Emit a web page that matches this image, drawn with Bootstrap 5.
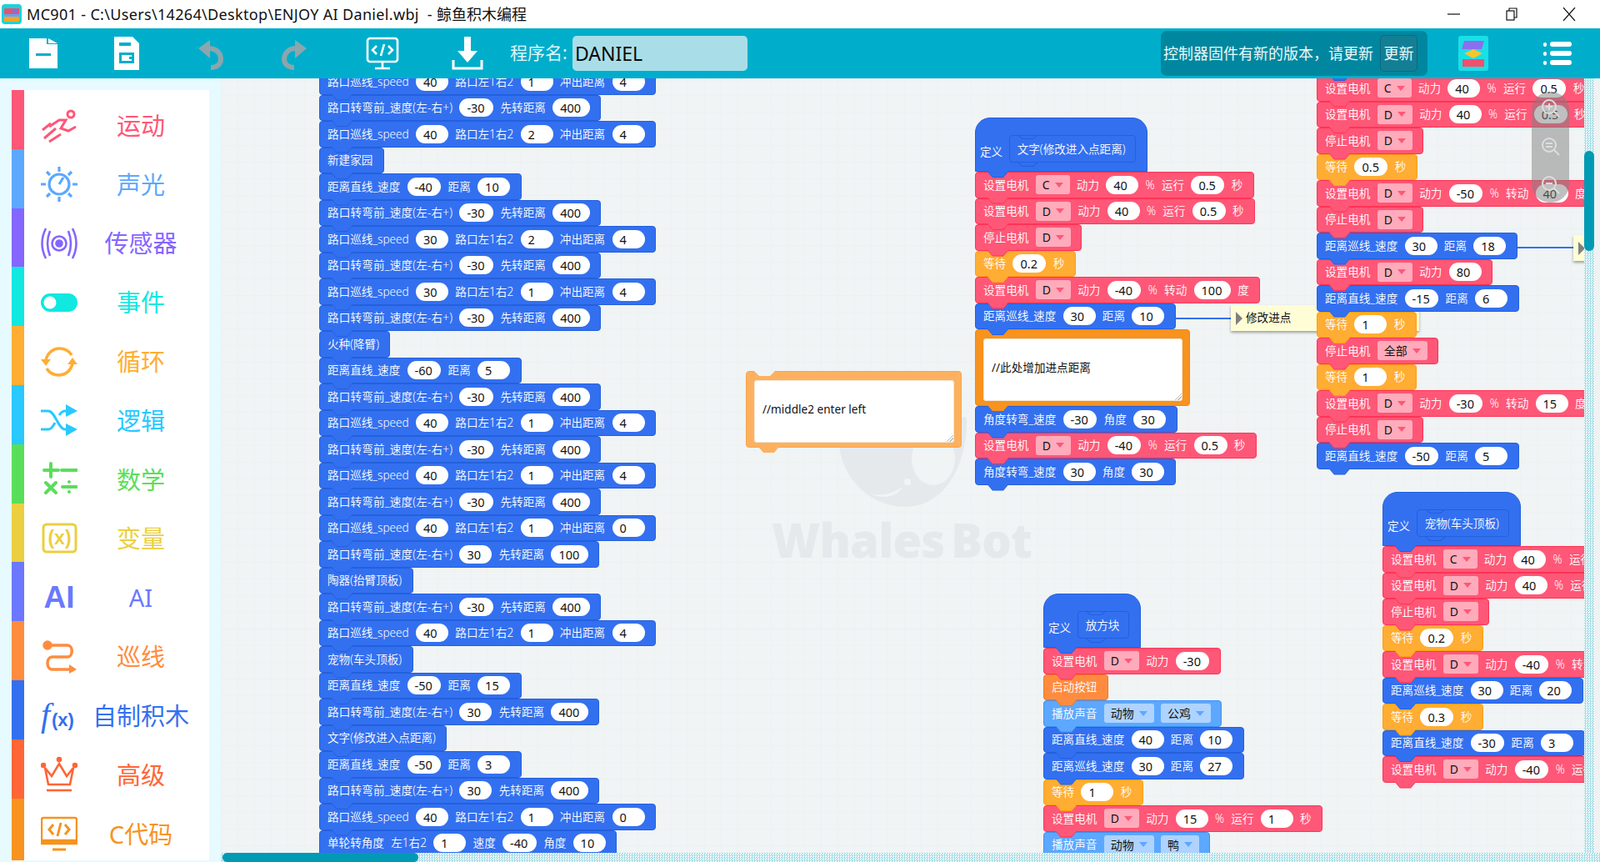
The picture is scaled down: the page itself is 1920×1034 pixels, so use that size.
<!DOCTYPE html>
<html lang="zh-CN">
<head>
<meta charset="utf-8">
<title>鲸鱼积木编程</title>
<link href="https://cdn.jsdelivr.net/npm/bootstrap@5.3.0/dist/css/bootstrap.min.css" rel="stylesheet">
<style>
html,body{height:100%;overflow:hidden}
body{font-family:"Noto Sans","Noto Sans CJK SC",sans-serif;background:#fff;color:#111}
.appw{width:1920px;height:1034px}
.ttl{height:34px;font-size:18px;padding-left:2px;line-height:34px;white-space:pre}
.ttl .lat{letter-spacing:.33px}
.ttl svg.wi{width:24px;height:24px;margin-right:6px}
.wbt{margin-left:auto;gap:53px;padding-right:29px}
.wbt svg{width:16px;height:16px}
.tbar{height:60px;background:#00aecb;padding-left:32px;flex:none}
.tbar svg.ti{width:40px;height:40px;flex:none}
.m60{margin-left:60px}.m62{margin-left:62px}.m65{margin-left:65px}
.pname{font-size:21px;color:#dff6fa;margin-left:31px;width:75px}
.pinp{width:210px;height:42px;background:#a9dee8;border-radius:5px;font-size:23px;padding-left:3px;line-height:42px;color:#0a0a0a}
.ntc{margin-left:auto;width:320px;height:54px;background:#00879f;border-radius:7px;padding-left:3px;color:#eaf9fb;font-size:18px;white-space:nowrap}
.ntc .btn{margin-left:8px;width:45px;height:44px;padding:0;background:#137f95;border:1px solid #0b6a7e;color:#eaf9fb;font-size:18px;border-radius:5px}
.lgo{margin-left:37px;width:36px;height:42px}
.mnu{margin-left:66px;margin-right:34px;width:34px;height:28px}
.side{width:265px;background:#e6faff;padding:14px 14px 0;flex:none}
.cats{width:237px;height:100%}
.cat{height:70.8px;flex:none;border-left:15px solid var(--c);background:#fff;color:var(--c);padding:14px 6px 0 20px;font-size:29px;line-height:1}
.cat:last-child{height:74px;padding-top:11px}
.cat svg{width:44px;height:44px;flex:none}
.cat .nm{flex:1;text-align:center;white-space:nowrap}
.wk{min-width:0}
.vp{background-color:#f0f4f5;background-image:linear-gradient(#edf1f3 1px,transparent 1px),linear-gradient(90deg,#edf1f3 1px,transparent 1px);background-size:20px 20px}
.dots{background:repeating-conic-gradient(#a5dde5 0 25%,#f5fcfd 0 50%) 0 0/3px 3px}
.vbar{width:12px;flex:none}
.vth{width:12px;height:120px;margin-top:87px;background:#009ab5;border-radius:6px}
.gut{width:7px;flex:none;background:#eef2f3}
.hbar{height:11px;flex:none;padding-left:2px}
.hth{width:235px;height:11px;background:#009ab5;border-radius:6px}
.wm-w{left:735px;top:406px;width:170px;height:120px}
.wm-t{left:661px;top:523px;font:800 56px/1.1 "Open Sans",sans-serif;color:#e6e9eb;letter-spacing:-.8px;word-spacing:-6px;white-space:pre}
.stk{align-items:flex-start}
.s1{left:118px;top:-12px}.s2{left:905px;top:47px}.s3{left:987px;top:618px}.s4{left:1315px;top:-35.5px}.s5{left:1394px;top:496px}
.blk{position:relative;height:31.5px;padding:0 12.5px 0 9px;gap:8.3px;align-items:center;flex:none;background:var(--c);border:1px solid var(--e);border-radius:4px;color:#fff;font-size:13.6px;font-weight:350;white-space:nowrap}
.blk::before,.blk::after{content:"";position:absolute;z-index:1;left:14px;width:25px;height:7px;clip-path:polygon(0 0,100% 0,76% 100%,24% 100%)}
.blk::before{bottom:-8px;background:var(--e)}
.blk::after{bottom:-7px;background:var(--c)}
.k-r{--c:#ff5777;--e:#ff3355;--d:#ffabbb}
.k-b{--c:#3370f0;--e:#2360dd}
.k-y{--c:#ffad33;--e:#ff9f10}
.k-o{--c:#ff8c3e;--e:#f5761d}
.k-l{--c:#5ca8ff;--e:#3d92f5;--d:#aed3ff}
.lw{letter-spacing:.17px}
.pil{height:22px;line-height:22px;min-width:39px;padding:0 10.5px 0 9px;border-radius:11px;background:#fff;color:#111;font-size:14.5px;font-weight:400}
.dd{height:23px;line-height:23px;padding:0 8px;border-radius:3px;background:var(--d);color:#111;font-size:14px;font-weight:400;display:flex;align-items:center;gap:6px}
.dd::after{content:"";width:0;height:0;border:5px solid transparent;border-top:6px solid var(--c);border-bottom:0}
.hat{height:65px;border-radius:18px 18px 0 0;align-items:flex-end;padding:0 13px 13px 5px;gap:7.5px}
.prt{position:relative;height:33px;line-height:31px;margin-bottom:-3px;padding:0 11px 0 9px;background:var(--c);border:1px solid var(--e);border-radius:4px}
.prt::before,.prt::after{content:"";position:absolute;left:9px;width:25px;height:5px;background:var(--e);clip-path:polygon(0 0,6px 5px,19px 5px,25px 0,23.5px 0,18.5px 4px,6.5px 4px,1.5px 0)}
.prt::before{top:-1px}
.prt::after{bottom:-6px}
.cmt{position:relative;flex:none;--c:#f7931e;--e:#f08a10;background:var(--c);border:1px solid var(--e);border-radius:4px;padding:10px 8px 5px 9px}
.cmt::after{content:"";position:absolute;z-index:1;left:14px;bottom:-7px;width:25px;height:7px;background:var(--c);clip-path:polygon(0 0,100% 0,76% 100%,24% 100%)}
.cmt-a{width:258px;height:92px}
.cmt-b{width:259px;height:92px;left:630px;top:351px;--c:#fcb160;--e:#f9a548}
.cmt-b::before{content:"";position:absolute;left:9px;top:-1px;width:25px;height:6px;background:#f0f4f5;clip-path:polygon(0 0,100% 0,76% 100%,24% 100%)}
.cin{position:relative;height:100%;background:#fff;border-radius:4px;color:#111;font-size:13.6px;padding:0 0 4px 10px;box-shadow:inset 0 0 0 1px #f3e6d6}
.cin::after{content:"";position:absolute;right:1px;bottom:1px;width:9px;height:9px;background:linear-gradient(135deg,transparent 50%,#bbb 50%,#bbb 60%,transparent 60%,transparent 72%,#bbb 72%,#bbb 82%,transparent 82%)}
.lnk{height:2px;background:#3370f0}
.lk1{left:1144px;top:287px;width:70px}
.lk2{left:1555px;top:202px;width:70px}
.nte{background:#fefdd6;box-shadow:0 2px 3px rgba(0,0,0,.35);height:31px;font-size:13.6px;color:#111;padding-left:6px;gap:4px}
.nte::before{content:"";width:0;height:0;border:8px solid transparent;border-left:8px solid #808080;border-right:0}
.nt1{left:1212px;top:272px;width:226px}
.nt2{left:1623px;top:188px;width:60px}
.zm{left:1573px;top:16px;width:45px;height:133px;border-radius:22px;background:rgba(128,128,128,.5);padding-top:9px;align-items:center;gap:24px;z-index:3}
.zm svg{width:22px;height:22px;flex:none}
</style>
</head>
<body>
<div class="appw d-flex flex-column overflow-hidden">
  <div class="ttl d-flex align-items-center flex-none">
    <svg class="wi" viewBox="0 0 24 24"><rect width="24" height="24" rx="4" fill="#19d3da"/><path d="M3 5h18v7H3z" fill="#e0566f"/><path d="M13 7h6v3h-6z" fill="#7f6df0"/><path d="M3 12h18v3H3z" fill="#5ca8ff"/><path d="M3 15h18v6H3z" fill="#f5a623"/></svg>
    <span><span class="lat">MC901 - C:\Users\14264\Desktop\ENJOY AI Daniel.wbj  - </span>鲸鱼积木编程</span>
    <div class="wbt d-flex align-items-center">
      <svg viewBox="0 0 16 16"><path d="M0 8h15" stroke="#111" stroke-width="1.2"/></svg>
      <svg viewBox="0 0 16 16" fill="none" stroke="#111" stroke-width="1.2"><rect x="2" y="4" width="9" height="11"/><path d="M5 4V1h9v11h-3"/></svg>
      <svg viewBox="0 0 16 16"><path d="M1 0l14 16M15 0L1 16" stroke="#111" stroke-width="1.2"/></svg>
    </div>
  </div>
  <div class="tbar d-flex align-items-center">
    <svg class="ti" viewBox="0 0 40 40"><path d="M3 2h21v7h13v29H3z" fill="#fff"/><path d="M26 2l11 6H26z" fill="#fff"/><path d="M11 20h18v3H11z" fill="#00aecb"/></svg>
    <svg class="ti m60" viewBox="0 0 40 40"><path d="M6 0h21l8 8v32H6q-1 0-1-1V1q0-1 1-1z" fill="#fff"/><path d="M11 7h14v4H11zM11 19h18v13H11z" fill="#00aecb"/><path d="M14 22h12v7H14z" fill="#fff"/><path d="M23 24h3v3h-3z" fill="#00aecb"/></svg>
    <svg class="ti m60" viewBox="0 0 40 40" fill="#8ba6ad"><path d="M6 14L20 4v22z"/><path d="M18 14C29 14 33 21 33 27c0 6-5 10-12 10" fill="none" stroke="#8ba6ad" stroke-width="6"/></svg>
    <svg class="ti m62" viewBox="0 0 40 40" fill="#8ba6ad"><path d="M34 14L20 4v22z"/><path d="M22 14C11 14 7 21 7 27c0 6 5 10 12 10" fill="none" stroke="#8ba6ad" stroke-width="6"/></svg>
    <svg class="ti m65" viewBox="0 0 40 40" fill="none" stroke="#fff" stroke-width="2.6"><rect x="2" y="2" width="36" height="28" rx="3"/><path d="M13 11l-5 5 5 5M27 11l5 5-5 5M22 9l-4 14M20 31v6M11 38h18"/></svg>
    <svg class="ti m62" viewBox="0 0 40 40"><path d="M16 0h8v17h8L20 31 8 17h8z" fill="#fff"/><path d="M3 28v10h34V28" fill="none" stroke="#fff" stroke-width="3"/></svg>
    <div class="pname">程序名:</div>
    <div class="pinp">DANIEL</div>
    <div class="ntc d-flex align-items-center">控制器固件有新的版本，请更新<button type="button" class="btn">更新</button></div>
    <svg class="lgo" viewBox="0 0 36 42"><rect width="36" height="42" rx="3" fill="#19dfe6"/><path d="M7 6h24l-3 10H4z" fill="#8a6ff0"/><path d="M18 16l11 5-11 6-11-6z" fill="#f7c431"/><path d="M5 28h26v9H5z" fill="#f0506e"/></svg>
    <svg class="mnu" viewBox="0 0 34 28" fill="#fff"><rect x="0" y="1" width="4" height="5" rx="2"/><rect x="8" y="0" width="26" height="6" rx="3"/><rect x="0" y="12" width="4" height="5" rx="2"/><rect x="8" y="11" width="26" height="6" rx="3"/><rect x="0" y="23" width="4" height="5" rx="2"/><rect x="8" y="22" width="26" height="6" rx="3"/></svg>
  </div>
  <div class="d-flex flex-grow-1 overflow-hidden">
    <nav class="side">
      <div class="cats d-flex flex-column">
        <div class="cat d-flex align-items-center" style="--c:#ff5777"><svg viewBox="0 0 44 44" fill="none" stroke="currentColor" stroke-width="3"><circle cx="36" cy="9" r="4"/><path d="M10 24l12-8h8l-6 10 9 3 9-5M2 28l10-8M4 38l14-12M10 42l14-9"/></svg><span class="nm">运动</span></div>
        <div class="cat d-flex align-items-center" style="--c:#5ca8ff"><svg viewBox="0 0 44 44" fill="none" stroke="currentColor" stroke-width="3.2"><circle cx="22" cy="22" r="12"/><path d="M22 22l5-8M22 1v6M22 37v6M0 22h6M38 22h6M7 7l4 4M33 33l4 4M37 7l-4 4M7 37l4-4"/></svg><span class="nm">声光</span></div>
        <div class="cat d-flex align-items-center" style="--c:#8566ff"><svg viewBox="0 0 44 44" fill="none" stroke="currentColor" stroke-width="2.6"><circle cx="22" cy="22" r="3.5" fill="currentColor"/><circle cx="22" cy="22" r="8.5"/><path d="M6 4Q-3 22 6 40M38 4q9 18 0 36M11 7Q5 22 11 37M33 7q6 15 0 30"/></svg><span class="nm">传感器</span></div>
        <div class="cat d-flex align-items-center" style="--c:#10e8e0"><svg viewBox="0 0 44 44"><rect y="11" width="44" height="22" rx="11" fill="currentColor"/><circle cx="11" cy="22" r="7.5" fill="#fff"/></svg><span class="nm">事件</span></div>
        <div class="cat d-flex align-items-center" style="--c:#ffad33"><svg viewBox="0 0 44 44" fill="none" stroke="currentColor" stroke-width="3.5"><path d="M6 20C8 11 15 6 22 6c7 0 12 3 15 8M38 24c-2 9-9 14-16 14-7 0-12-3-15-8"/><path d="M0 19h12l-6 8zM32 25h12l-6-8z" fill="currentColor" stroke="none"/></svg><span class="nm">循环</span></div>
        <div class="cat d-flex align-items-center" style="--c:#29c8ff"><svg viewBox="0 0 44 44" fill="none" stroke="currentColor" stroke-width="3"><path d="M0 11h9c8 0 12 22 20 22h4M0 33h9c3 0 6-4 8-8M22 16c2-3 4-5 7-5h4"/><path d="M30 3l14 8-14 7zM30 26l14 7-14 8z" fill="currentColor" stroke="none"/></svg><span class="nm">逻辑</span></div>
        <div class="cat d-flex align-items-center" style="--c:#5ade5a"><svg viewBox="0 0 44 44" fill="none" stroke="currentColor" stroke-width="4"><path d="M12 3v16M4 11h17M25 11h18M6 26l12 12M18 26L6 38M26 31h17" stroke-linecap="round"/><circle cx="34" cy="25" r="1.5" fill="currentColor" stroke-width="1"/><circle cx="34" cy="37" r="1.5" fill="currentColor" stroke-width="1"/></svg><span class="nm">数学</span></div>
        <div class="cat d-flex align-items-center" style="--c:#ebcf40"><svg viewBox="0 0 44 44"><rect x="3" y="5" width="39" height="33" rx="4" fill="none" stroke="currentColor" stroke-width="3"/><text x="22.500" y="29" text-anchor="middle" font-size="23" font-weight="700" fill="currentColor" font-family="Liberation Sans,sans-serif">(x)</text></svg><span class="nm">变量</span></div>
        <div class="cat d-flex align-items-center" style="--c:#6b78ff"><svg viewBox="0 0 44 44"><text x="22" y="34" text-anchor="middle" font-size="37" font-weight="900" fill="currentColor" font-family="Liberation Sans,sans-serif">AI</text></svg><span class="nm">AI</span></div>
        <div class="cat d-flex align-items-center" style="--c:#ff8c3e"><svg viewBox="0 0 44 44" fill="none" stroke="currentColor" stroke-width="3.5"><circle cx="8" cy="8" r="4" fill="currentColor"/><path d="M8 8h24c7 0 7 14 0 14H14c-8 0-8 15 0 15h24"/><path d="M34 31l9 6-9 5z" fill="currentColor" stroke="none"/></svg><span class="nm">巡线</span></div>
        <div class="cat d-flex align-items-center" style="--c:#3370f0"><svg viewBox="0 0 44 44" fill="currentColor" font-family="Liberation Serif,serif"><text x="0" y="35" font-size="40" font-style="italic">f</text><text x="13" y="35" font-size="22" font-weight="700" font-family="Liberation Sans,sans-serif">(x)</text></svg><span class="nm">自制积木</span></div>
        <div class="cat d-flex align-items-center" style="--c:#ff6536"><svg viewBox="0 0 44 44" fill="none" stroke="currentColor" stroke-width="2.6"><path d="M5 14l8 10 9-15 9 15 8-10-4 20H9z"/><path d="M7 41h30"/><circle cx="22" cy="4" r="2" fill="currentColor"/><circle cx="3" cy="11" r="2" fill="currentColor"/><circle cx="41" cy="11" r="2" fill="currentColor"/></svg><span class="nm">高级</span></div>
        <div class="cat d-flex align-items-center" style="--c:#f7931e"><svg viewBox="0 0 44 44" fill="none" stroke="currentColor" stroke-width="2.5"><rect x="1" y="3" width="42" height="29" rx="2"/><path d="M1 30h42v4H1z" fill="currentColor"/><path d="M15 11l-5 6 5 6M29 11l5 6-5 6M24 9l-4 16M14 41h16" stroke-width="3"/></svg><span class="nm">C代码</span></div>
      </div>
    </nav>
    <main class="wk d-flex flex-column flex-grow-1">
      <div class="d-flex flex-grow-1 overflow-hidden">
        <div class="vp position-relative flex-grow-1 overflow-hidden">
          <svg class="wm-w position-absolute" viewBox="0 0 170 120"><path d="M6 20c0 60 45 88 80 88 45 0 74-45 74-104 0-3-1-4-3-4l-150 10c-1 0-1 6-1 10z" fill="#e6e9eb"/><ellipse cx="120" cy="50" rx="26" ry="32" fill="#f0f4f5"/><circle cx="89" cy="78" r="4" fill="#f0f4f5"/><path d="M42 92c16 4 30 0 41-8-6 11-20 16-41 8z" fill="#f0f4f5"/></svg>
          <div class="wm-t position-absolute">Whales Bot</div>

          <div class="stk s1 position-absolute d-flex flex-column">
            <div class="blk k-b d-flex">路口巡线_speed<span class="pil">40</span>路口左1右2<span class="pil">1</span>冲出距离<span class="pil">4</span></div>
            <div class="blk k-b d-flex"><span class="lw">路口转弯前_速度(左-右+)</span><span class="pil">-30</span>先转距离<span class="pil">400</span></div>
            <div class="blk k-b d-flex">路口巡线_speed<span class="pil">40</span>路口左1右2<span class="pil">2</span>冲出距离<span class="pil">4</span></div>
            <div class="blk k-b d-flex">新建家园</div>
            <div class="blk k-b d-flex">距离直线_速度<span class="pil">-40</span>距离<span class="pil">10</span></div>
            <div class="blk k-b d-flex"><span class="lw">路口转弯前_速度(左-右+)</span><span class="pil">-30</span>先转距离<span class="pil">400</span></div>
            <div class="blk k-b d-flex">路口巡线_speed<span class="pil">30</span>路口左1右2<span class="pil">2</span>冲出距离<span class="pil">4</span></div>
            <div class="blk k-b d-flex"><span class="lw">路口转弯前_速度(左-右+)</span><span class="pil">-30</span>先转距离<span class="pil">400</span></div>
            <div class="blk k-b d-flex">路口巡线_speed<span class="pil">30</span>路口左1右2<span class="pil">1</span>冲出距离<span class="pil">4</span></div>
            <div class="blk k-b d-flex"><span class="lw">路口转弯前_速度(左-右+)</span><span class="pil">-30</span>先转距离<span class="pil">400</span></div>
            <div class="blk k-b d-flex">火种(降臂)</div>
            <div class="blk k-b d-flex">距离直线_速度<span class="pil">-60</span>距离<span class="pil">5</span></div>
            <div class="blk k-b d-flex"><span class="lw">路口转弯前_速度(左-右+)</span><span class="pil">-30</span>先转距离<span class="pil">400</span></div>
            <div class="blk k-b d-flex">路口巡线_speed<span class="pil">40</span>路口左1右2<span class="pil">1</span>冲出距离<span class="pil">4</span></div>
            <div class="blk k-b d-flex"><span class="lw">路口转弯前_速度(左-右+)</span><span class="pil">-30</span>先转距离<span class="pil">400</span></div>
            <div class="blk k-b d-flex">路口巡线_speed<span class="pil">40</span>路口左1右2<span class="pil">1</span>冲出距离<span class="pil">4</span></div>
            <div class="blk k-b d-flex"><span class="lw">路口转弯前_速度(左-右+)</span><span class="pil">-30</span>先转距离<span class="pil">400</span></div>
            <div class="blk k-b d-flex">路口巡线_speed<span class="pil">40</span>路口左1右2<span class="pil">1</span>冲出距离<span class="pil">0</span></div>
            <div class="blk k-b d-flex"><span class="lw">路口转弯前_速度(左-右+)</span><span class="pil">30</span>先转距离<span class="pil">100</span></div>
            <div class="blk k-b d-flex">陶器(抬臂顶板)</div>
            <div class="blk k-b d-flex"><span class="lw">路口转弯前_速度(左-右+)</span><span class="pil">-30</span>先转距离<span class="pil">400</span></div>
            <div class="blk k-b d-flex">路口巡线_speed<span class="pil">40</span>路口左1右2<span class="pil">1</span>冲出距离<span class="pil">4</span></div>
            <div class="blk k-b d-flex">宠物(车头顶板)</div>
            <div class="blk k-b d-flex">距离直线_速度<span class="pil">-50</span>距离<span class="pil">15</span></div>
            <div class="blk k-b d-flex"><span class="lw">路口转弯前_速度(左-右+)</span><span class="pil">30</span>先转距离<span class="pil">400</span></div>
            <div class="blk k-b d-flex">文字(修改进入点距离)</div>
            <div class="blk k-b d-flex">距离直线_速度<span class="pil">-50</span>距离<span class="pil">3</span></div>
            <div class="blk k-b d-flex"><span class="lw">路口转弯前_速度(左-右+)</span><span class="pil">30</span>先转距离<span class="pil">400</span></div>
            <div class="blk k-b d-flex">路口巡线_speed<span class="pil">40</span>路口左1右2<span class="pil">1</span>冲出距离<span class="pil">0</span></div>
            <div class="blk k-b d-flex"><span>单轮转角度</span>左1右2<span class="pil">1</span>速度<span class="pil">-40</span>角度<span class="pil">10</span></div>
          </div>

          <div class="cmt cmt-b position-absolute"><div class="cin d-flex align-items-center">//middle2 enter left</div></div>

          <div class="lnk lk1 position-absolute"></div>
          <div class="nte nt1 position-absolute d-flex align-items-center">修改进点</div>

          <div class="stk s2 position-absolute d-flex flex-column">
            <div class="blk k-b hat d-flex"><span>定义</span><span class="prt">文字(修改进入点距离)</span></div>
            <div class="blk k-r d-flex">设置电机<span class="dd">C</span>动力<span class="pil">40</span><span>%</span>运行<span class="pil">0.5</span>秒</div>
            <div class="blk k-r d-flex">设置电机<span class="dd">D</span>动力<span class="pil">40</span><span>%</span>运行<span class="pil">0.5</span>秒</div>
            <div class="blk k-r d-flex">停止电机<span class="dd">D</span></div>
            <div class="blk k-y d-flex">等待<span class="pil">0.2</span>秒</div>
            <div class="blk k-r d-flex">设置电机<span class="dd">D</span>动力<span class="pil">-40</span><span>%</span>转动<span class="pil">100</span>度</div>
            <div class="blk k-b d-flex">距离巡线_速度<span class="pil">30</span>距离<span class="pil">10</span></div>
            <div class="cmt cmt-a"><div class="cin d-flex align-items-center">//此处增加进点距离</div></div>
            <div class="blk k-b d-flex">角度转弯_速度<span class="pil">-30</span>角度<span class="pil">30</span></div>
            <div class="blk k-r d-flex">设置电机<span class="dd">D</span>动力<span class="pil">-40</span><span>%</span>运行<span class="pil">0.5</span>秒</div>
            <div class="blk k-b d-flex">角度转弯_速度<span class="pil">30</span>角度<span class="pil">30</span></div>
          </div>

          <div class="stk s3 position-absolute d-flex flex-column">
            <div class="blk k-b hat d-flex"><span>定义</span><span class="prt">放方块</span></div>
            <div class="blk k-r d-flex">设置电机<span class="dd">D</span>动力<span class="pil">-30</span></div>
            <div class="blk k-o d-flex">启动按钮</div>
            <div class="blk k-l d-flex">播放声音<span class="dd">动物</span><span class="dd">公鸡</span></div>
            <div class="blk k-b d-flex">距离直线_速度<span class="pil">40</span>距离<span class="pil">10</span></div>
            <div class="blk k-b d-flex">距离巡线_速度<span class="pil">30</span>距离<span class="pil">27</span></div>
            <div class="blk k-y d-flex">等待<span class="pil">1</span>秒</div>
            <div class="blk k-r d-flex">设置电机<span class="dd">D</span>动力<span class="pil">15</span><span>%</span>运行<span class="pil">1</span>秒</div>
            <div class="blk k-l d-flex">播放声音<span class="dd">动物</span><span class="dd">鸭</span></div>
          </div>

          <div class="lnk lk2 position-absolute"></div>
          <div class="nte nt2 position-absolute d-flex align-items-center"></div>

          <div class="stk s4 position-absolute d-flex flex-column">
            <div class="blk k-b d-flex"></div>
            <div class="blk k-r d-flex">设置电机<span class="dd">C</span>动力<span class="pil">40</span><span>%</span>运行<span class="pil">0.5</span>秒</div>
            <div class="blk k-r d-flex">设置电机<span class="dd">D</span>动力<span class="pil">40</span><span>%</span>运行<span class="pil">0.5</span>秒</div>
            <div class="blk k-r d-flex">停止电机<span class="dd">D</span></div>
            <div class="blk k-y d-flex">等待<span class="pil">0.5</span>秒</div>
            <div class="blk k-r d-flex">设置电机<span class="dd">D</span>动力<span class="pil">-50</span><span>%</span>转动<span class="pil">40</span>度</div>
            <div class="blk k-r d-flex">停止电机<span class="dd">D</span></div>
            <div class="blk k-b d-flex">距离巡线_速度<span class="pil">30</span>距离<span class="pil">18</span></div>
            <div class="blk k-r d-flex">设置电机<span class="dd">D</span>动力<span class="pil">80</span></div>
            <div class="blk k-b d-flex">距离直线_速度<span class="pil">-15</span>距离<span class="pil">6</span></div>
            <div class="blk k-y d-flex">等待<span class="pil">1</span>秒</div>
            <div class="blk k-r d-flex">停止电机<span class="dd">全部</span></div>
            <div class="blk k-y d-flex">等待<span class="pil">1</span>秒</div>
            <div class="blk k-r d-flex">设置电机<span class="dd">D</span>动力<span class="pil">-30</span><span>%</span>转动<span class="pil">15</span>度</div>
            <div class="blk k-r d-flex">停止电机<span class="dd">D</span></div>
            <div class="blk k-b d-flex">距离直线_速度<span class="pil">-50</span>距离<span class="pil">5</span></div>
          </div>

          <div class="stk s5 position-absolute d-flex flex-column">
            <div class="blk k-b hat d-flex"><span>定义</span><span class="prt">宠物(车头顶板)</span></div>
            <div class="blk k-r d-flex">设置电机<span class="dd">C</span>动力<span class="pil">40</span><span>%</span>运行<span class="pil">0.5</span>秒</div>
            <div class="blk k-r d-flex">设置电机<span class="dd">D</span>动力<span class="pil">40</span><span>%</span>运行<span class="pil">0.5</span>秒</div>
            <div class="blk k-r d-flex">停止电机<span class="dd">D</span></div>
            <div class="blk k-y d-flex">等待<span class="pil">0.2</span>秒</div>
            <div class="blk k-r d-flex">设置电机<span class="dd">D</span>动力<span class="pil">-40</span><span>%</span>转动<span class="pil">100</span>度</div>
            <div class="blk k-b d-flex">距离巡线_速度<span class="pil">30</span>距离<span class="pil">20</span></div>
            <div class="blk k-y d-flex">等待<span class="pil">0.3</span>秒</div>
            <div class="blk k-b d-flex">距离直线_速度<span class="pil">-30</span>距离<span class="pil">3</span></div>
            <div class="blk k-r d-flex">设置电机<span class="dd">D</span>动力<span class="pil">-40</span><span>%</span>运行<span class="pil">0.5</span>秒</div>
          </div>

          <div class="zm position-absolute d-flex flex-column">
            <svg viewBox="0 0 22 22" fill="none" stroke="#ddd" stroke-width="2"><circle cx="9" cy="9" r="8"/><path d="M5 9h8M9 5v8M15 15l6 6"/></svg>
            <svg viewBox="0 0 22 22" fill="none" stroke="#ddd" stroke-width="2"><circle cx="9" cy="9" r="8"/><path d="M5 7h8M5 11h8M15 15l6 6"/></svg>
            <svg viewBox="0 0 22 22" fill="none" stroke="#ddd" stroke-width="2"><circle cx="9" cy="9" r="8"/><path d="M5 9h8M15 15l6 6"/></svg>
          </div>
        </div>
        <div class="vbar dots"><div class="vth"></div></div>
        <div class="gut"></div>
      </div>
      <div class="hbar dots"><div class="hth"></div></div>
    </main>
  </div>
</div>
<script src="https://cdn.jsdelivr.net/npm/bootstrap@5.3.0/dist/js/bootstrap.bundle.min.js"></script>
</body>
</html>
